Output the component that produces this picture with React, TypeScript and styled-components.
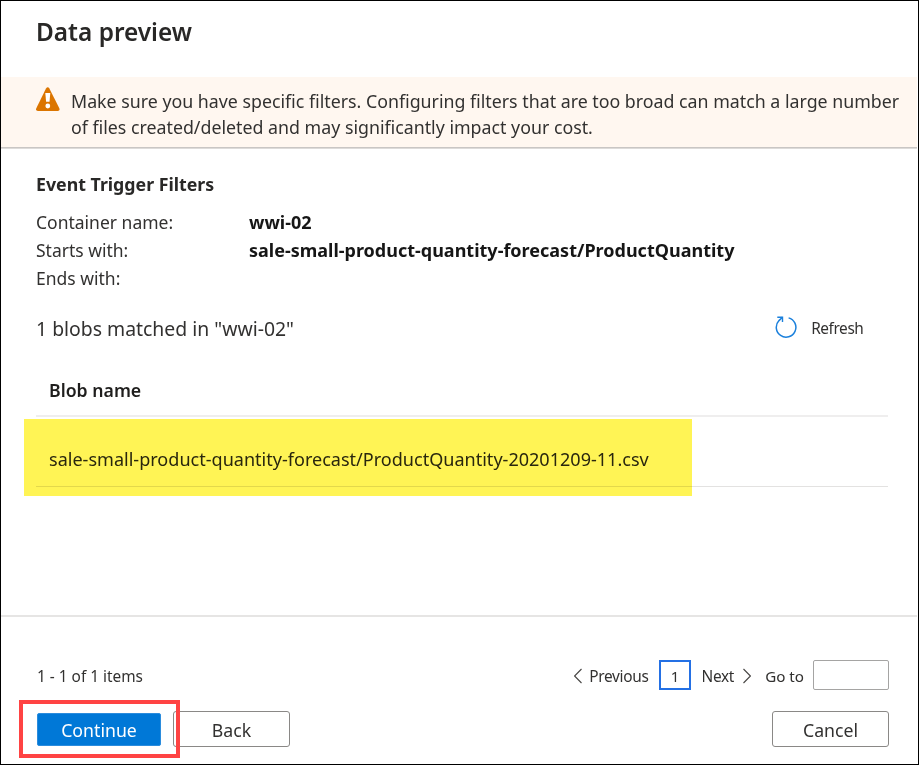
import React from 'react';
import styled, { createGlobalStyle } from 'styled-components';

const GlobalStyle = createGlobalStyle`
  *, *::before, *::after { box-sizing: border-box; }
  body { margin: 0; background: #fff; }
  button, input { font-family: inherit; }
`;

const Panel = styled.main`
  position: relative;
  display: flex;
  flex-direction: column;
  width: 919px;
  height: 765px;
  overflow: hidden;
  border: 1px solid #000;
  background: #fff;
  color: #323130;
  font-family: 'Noto Sans', 'Open Sans', sans-serif;
  white-space: nowrap;
`;

const Header = styled.header`
  height: 76px;
  padding-left: 35px;
`;

const Title = styled.h1`
  margin: 0;
  color: #292827;
  font-size: 24.4px;
  font-weight: 600;
  line-height: 61px;
`;

const Banner = styled.section`
  display: flex;
  gap: 11px;
  height: 72px;
  margin-right: 1px;
  padding: 10px 0 0 35px;
  border-bottom: 1px solid #dddbd9;
  box-shadow: inset 0 -1px 0 #c9c6c4;
  background: #fff7f0;
`;

const BannerText = styled.p`
  margin: 2px 0 0;
  font-size: 17.8px;
  line-height: 25.5px;
`;

const Content = styled.section`
  height: 466px;
  padding: 21px 30px 0 35px;
`;

const SectionTitle = styled.h2`
  margin: 0;
  color: #292827;
  font-size: 17.75px;
  font-weight: 700;
  line-height: 28px;
`;

const FilterList = styled.dl`
  display: grid;
  grid-template-columns: 213px 1fr;
  grid-auto-rows: 28px;
  margin: 10px 0 0;
  font-size: 17.5px;
  line-height: 28px;
`;

const FilterValue = styled.dd`
  margin: 0;
  color: #161616;
  font-size: 18px;
  font-weight: 700;
`;

const SummaryRow = styled.div`
  display: flex;
  align-items: center;
  justify-content: space-between;
  height: 40px;
  margin-top: 15.75px;
  padding-right: 24.5px;
`;

const Summary = styled.span`
  padding-top: 2px;
  font-size: 19.4px;
  line-height: 38px;
`;

const RefreshButton = styled.button`
  display: flex;
  align-items: center;
  gap: 14px;
  padding: 0;
  border: 0;
  background: none;
  color: inherit;
  font-size: 15.4px;
  letter-spacing: -0.4px;
  line-height: 38px;
`;

const RefreshLabel = styled.span`
  padding-top: 2px;
`;

const Row = styled.div<{ $head?: boolean }>`
  height: ${(p) => (p.$head ? 69 : 70)}px;
  padding: 28px 0 0 13px;
  border-bottom: ${(p) => (p.$head ? '2px solid #efeeee' : '1px solid #e3e2e1')};
  color: ${(p) => (p.$head ? '#1f1e1d' : '#292827')};
  font-size: ${(p) => (p.$head ? 17.7 : 18.06)}px;
  font-weight: ${(p) => (p.$head ? 600 : 400)};
  line-height: 28px;
`;

const Footer = styled.footer`
  flex: 1;
  margin-right: 1px;
  padding: 43px 28px 0 36px;
  border-top: 2px solid #e6e5e4;
`;

const PagerRow = styled.div`
  display: flex;
  justify-content: space-between;
  height: 31px;
`;

const ItemCount = styled.span`
  font-size: 15.4px;
  line-height: 33px;
`;

const Pager = styled.nav`
  display: flex;
  height: 31px;
  line-height: 31px;
`;

const PageStep = styled.button<{ $gap: number }>`
  display: flex;
  align-items: center;
  gap: ${(p) => p.$gap}px;
  padding: 1px 0 0;
  border: 0;
  background: none;
  color: inherit;
  font-size: 15.4px;
  letter-spacing: -0.3px;
`;

const PageNumber = styled.span`
  display: flex;
  align-items: center;
  justify-content: center;
  width: 32px;
  height: 30px;
  margin: 0 11px 0 10px;
  padding: 2px 0 0 1px;
  border: 2px solid #2470e4;
  font-size: 15px;
`;

const GoTo = styled.label`
  display: flex;
  gap: 9px;
  margin-left: 14px;
  font-size: 15.2px;
  line-height: 32px;
`;

const GoToInput = styled.input`
  width: 76px;
  height: 30px;
  padding: 0 6px;
  border: 1px solid #a5a4a3;
  border-radius: 2px;
  background: #fff;
`;

const Actions = styled.div`
  display: flex;
  align-items: center;
  height: 36px;
  margin-top: 20px;
`;

const Button = styled.button<{ $primary?: boolean }>`
  width: ${(p) => (p.$primary ? 124 : 117)}px;
  height: ${(p) => (p.$primary ? 33 : 36)}px;
  padding: ${(p) => (p.$primary ? 1 : 3)}px 0 0;
  border: ${(p) => (p.$primary ? '1px solid #2b8cdd' : '1px solid #8a8886')};
  border-radius: ${(p) => (p.$primary ? 2 : 3)}px;
  background: ${(p) => (p.$primary ? '#0078d7' : '#fff')};
  color: ${(p) => (p.$primary ? '#fff' : '#323130')};
  font-size: 17.7px;
  line-height: 31px;

  & + & {
    margin-left: 12px;
  }

  &:last-child {
    margin-left: auto;
  }
`;

/* Marker stroke laid over the result row. */
const Highlight = styled.div`
  position: absolute;
  left: 23px;
  top: 418px;
  width: 668px;
  height: 77px;
  background: #fff455;
  mix-blend-mode: multiply;
  pointer-events: none;
`;

/* Callout frame around the primary action. */
const Callout = styled.div`
  position: absolute;
  left: 18px;
  top: 699px;
  width: 161px;
  height: 58px;
  border: 4px solid #ff4343;
  pointer-events: none;
`;

const WarningIcon = () => (
  <svg width="24" height="24" viewBox="0 0 24 24" aria-hidden="true">
    <path
      d="M10 1.5Q11.7-.9 13.4 1.5L23.3 21.2Q24.3 24 21.8 24H1.9Q-.8 24 .3 21.2Z"
      fill="#db7500"
    />
    <path d="M9.3 6h5l-.8 8.8h-3.4z" fill="#fff" />
    <circle cx="11.8" cy="19" r="2.4" fill="#fff" />
  </svg>
);

const RefreshIcon = () => (
  <svg width="22" height="23" viewBox="0 0 22 23" fill="none" stroke="#1b80dc" aria-hidden="true">
    <path d="M13.6 1.9A9.8 9.8 0 1 1 4 4.6L7.4 1.2" strokeWidth="1.5" />
    <path d="M2.3 1.2H7.5V6" strokeWidth="1.4" />
  </svg>
);

const Chevron = ({ next }: { next?: boolean }) => (
  <svg width="8" height="16" viewBox="0 0 8 16" fill="none" stroke="#484644" strokeWidth="1.1" aria-hidden="true">
    <path d={next ? 'M.5 1 7.4 8 .5 15' : 'M7.5 1 .6 8 7.5 15'} />
  </svg>
);

const filters = [
  { label: 'Container name:', value: 'wwi-02' },
  { label: 'Starts with:', value: 'sale-small-product-quantity-forecast/ProductQuantity' },
  { label: 'Ends with:', value: '' },
];

export default function App() {
  return (
    <>
      <GlobalStyle />
      <Panel>
        <Header>
          <Title>Data preview</Title>
        </Header>
        <Banner>
          <WarningIcon />
          <BannerText>
            Make sure you have specific filters. Configuring filters that are too broad can match a large number
            <br />
            of files created/deleted and may significantly impact your cost.
          </BannerText>
        </Banner>
        <Content>
          <SectionTitle>Event Trigger Filters</SectionTitle>
          <FilterList>
            {filters.map(({ label, value }) => (
              <React.Fragment key={label}>
                <dt>{label}</dt>
                <FilterValue>{value}</FilterValue>
              </React.Fragment>
            ))}
          </FilterList>
          <SummaryRow>
            <Summary>1 blobs matched in "wwi-02"</Summary>
            <RefreshButton>
              <RefreshIcon />
              <RefreshLabel>Refresh</RefreshLabel>
            </RefreshButton>
          </SummaryRow>
          <Row $head>Blob name</Row>
          <Row>sale-small-product-quantity-forecast/ProductQuantity-20201209-11.csv</Row>
        </Content>
        <Footer>
          <PagerRow>
            <ItemCount>1 - 1 of 1 items</ItemCount>
            <Pager>
              <PageStep $gap={7}>
                <Chevron />
                Previous
              </PageStep>
              <PageNumber>1</PageNumber>
              <PageStep $gap={9}>
                Next
                <Chevron next />
              </PageStep>
              <GoTo>
                Go to
                <GoToInput />
              </GoTo>
            </Pager>
          </PagerRow>
          <Actions>
            <Button $primary>Continue</Button>
            <Button>Back</Button>
            <Button>Cancel</Button>
          </Actions>
        </Footer>
        <Highlight />
        <Callout />
      </Panel>
    </>
  );
}
